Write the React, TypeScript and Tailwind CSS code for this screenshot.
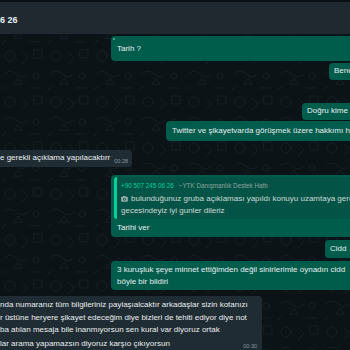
import React from "react";

const font = { fontFamily: '"Liberation Sans", Arial, sans-serif' };

function Camera() {
  return (
    <svg width="7" height="6" viewBox="0 0 14 12" className="inline-block mr-[3px] align-[-1px]">
      <rect x="0.5" y="1.5" width="13" height="10" rx="1.5" fill="#9fb3ad" />
      <rect x="4" y="0" width="5" height="2.5" rx="0.8" fill="#9fb3ad" />
      <circle cx="7" cy="6.5" r="2.8" fill="#025144" />
      <circle cx="7" cy="6.5" r="1.6" fill="#9fb3ad" />
    </svg>
  );
}

function Wallpaper() {
  return (
    <svg className="absolute inset-0 w-full h-full" width="350" height="350">
      <defs>
        <pattern id="wp" width="46" height="46" patternUnits="userSpaceOnUse">
          <g fill="none" stroke="#141d22" strokeWidth="1" strokeLinecap="round">
            <circle cx="10" cy="10" r="5" />
            <path d="M22 6 l6 6 l-6 6" />
            <path d="M34 4 h8 v8 h-8 z" />
            <path d="M4 28 q6 -6 12 0 t12 0" />
            <circle cx="36" cy="30" r="3" />
            <path d="M14 38 l4 -6 l4 6 z" />
            <path d="M30 42 h10" />
            <path d="M2 44 l4 -4" />
          </g>
        </pattern>
      </defs>
      <rect width="350" height="350" fill="url(#wp)" />
    </svg>
  );
}

export default function App() {
  return (
    <div
      className="relative w-[350px] h-[350px] overflow-hidden bg-[#0c1317] text-[#e9edef] text-[8px] leading-[12.5px]"
      style={font}
    >
      <Wallpaper />
      <div className="relative flex flex-col h-full">
        {/* header */}
        <div className="h-[2px] bg-[#0a1014] shrink-0" />
        <div className="h-[32px] bg-[#1f292f] shrink-0 flex items-center pl-0 pt-[4px]">
          <span className="text-[9px] font-bold text-[#e9edef] whitespace-nowrap">6 26</span>
        </div>

        {/* Tarih ? */}
        <div className="mt-[2px] ml-[111px] mr-[-20px] h-[25px] rounded-[4px] bg-[#005c4b] relative flex items-center pl-[6px] pt-[1px] shrink-0">
          <span className="absolute left-[2px] top-[2px] w-[2px] h-[2px] rounded-full bg-[#37c79a]" />
          <span className="whitespace-nowrap">Tarih ?</span>
        </div>

        {/* Bene */}
        <div className="mt-[2px] ml-[329px] mr-[-30px] h-[17px] rounded-[4px] bg-[#005c4b] flex items-center pl-[5px] shrink-0">
          <span className="whitespace-nowrap">Bene</span>
        </div>

        {/* Doğru kime */}
        <div className="mt-[23px] ml-[302px] mr-[-30px] h-[17px] rounded-[4px] bg-[#005c4b] flex items-center pl-[5px] shrink-0">
          <span className="whitespace-nowrap">Doğru kime</span>
        </div>

        {/* Twitter */}
        <div className="mt-[1px] ml-[166px] mr-[-40px] h-[20px] rounded-[4px] bg-[#005c4b] flex items-center pl-[6px] shrink-0">
          <span className="whitespace-nowrap">Twitter ve şikayetvarda görüşmek üzere hakkımı h</span>
        </div>

        {/* incoming 1 */}
        <div className="mt-[9px] ml-[-6px] w-[138px] h-[17px] rounded-[4px] bg-[#202c33] flex items-center pl-[6px] pr-[4px] shrink-0">
          <span className="whitespace-nowrap">e gerekli açıklama yapılacaktırr</span>
          <span className="ml-auto text-[5.5px] text-[#8696a0] pt-[5px]">00:28</span>
        </div>

        {/* quote bubble */}
        <div className="mt-[8px] ml-[111px] mr-[-30px] h-[62px] rounded-[4px] bg-[#005c4b] flex flex-col pt-[2px] pl-[3px] shrink-0">
          <div className="h-[42px] rounded-[3px] bg-[#035446] flex overflow-hidden">
            <div className="w-[3px] bg-[#06cf9c] shrink-0" />
            <div className="flex flex-col pl-[4px] pt-[2px]">
              <div className="whitespace-nowrap text-[6.3px] leading-[13px]">
                <span className="text-[#06cf9c]">+90 507 245 06 26</span>
                <span className="ml-[5px] text-[#8fa39d]">~YTK Danışmanlık Destek Hattı</span>
              </div>
              <div className="whitespace-nowrap text-[#cfd8d5] leading-[13px]">
                <Camera />
                bulunduğunuz gruba açıklaması yapıldı konuyu uzamtaya gerek y
              </div>
              <div className="whitespace-nowrap text-[#cfd8d5] leading-[12px]">gecesindeyiz iyi gunler dileriz</div>
            </div>
          </div>
          <div className="whitespace-nowrap pl-[3px] pt-[3px]">Tarihi ver</div>
        </div>

        {/* Cidd */}
        <div className="mt-[3px] ml-[325px] mr-[-30px] h-[18px] rounded-[4px] bg-[#005c4b] flex items-center pl-[5px] shrink-0">
          <span className="whitespace-nowrap">Cidd</span>
        </div>

        {/* 3 kuruşluk */}
        <div className="mt-[3px] ml-[111px] mr-[-30px] h-[29px] rounded-[4px] bg-[#005c4b] flex flex-col justify-center pl-[6px] pt-[1px] shrink-0">
          <div className="whitespace-nowrap">3 kuruşluk şeye minnet ettiğimden değil sinirlerimle oynadın cidd</div>
          <div className="whitespace-nowrap">böyle bir bildiri</div>
        </div>

        {/* incoming 2 */}
        <div className="mt-[6px] ml-[-6px] w-[268px] h-[60px] rounded-[4px] bg-[#202c33] flex flex-col pl-[6px] pt-[3px] shrink-0">
          <div className="whitespace-nowrap">nda numaranız tüm bilgileriniz paylaşıalcaktır arkadaşlar sizin kotanızı</div>
          <div className="whitespace-nowrap">r üstüne heryere şikayet edeceğim diye bizleri de  tehiti ediyor diye not</div>
          <div className="whitespace-nowrap">ba atılan mesaja bile inanmıyorsun sen kural var diyoruz ortak</div>
          <div className="flex items-center pr-[5px]">
            <span className="whitespace-nowrap">lar arama yapamazsın diyoruz karşıo çıkıyorsun</span>
            <span className="ml-auto text-[5.5px] text-[#8696a0] pt-[3px]">00:30</span>
          </div>
        </div>
      </div>
    </div>
  );
}
